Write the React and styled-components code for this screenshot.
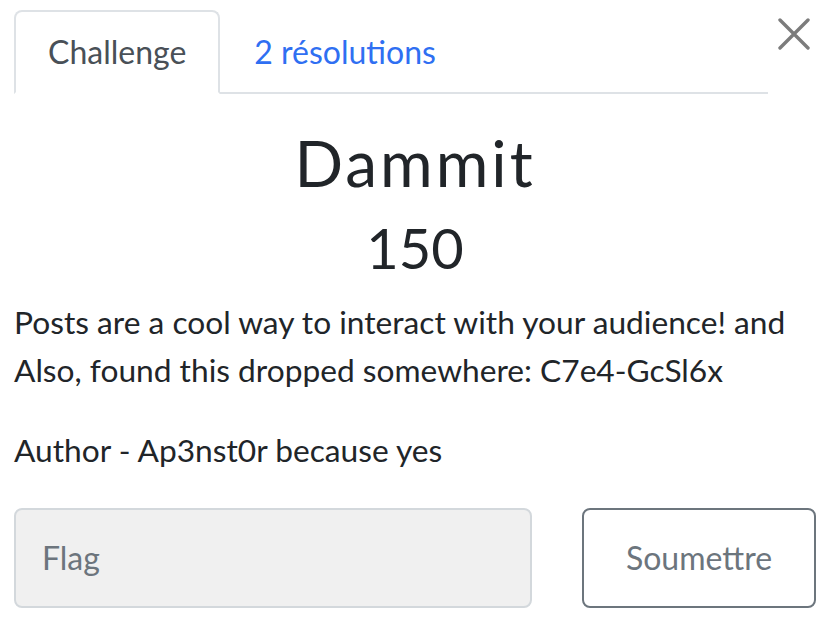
import React from "react";
import styled, { createGlobalStyle } from "styled-components";

const Global = createGlobalStyle`
  html, body { margin: 0; padding: 0; background: #fff; }
  body { font-family: Lato, "Noto Sans", sans-serif; color: #212529; }
  * { box-sizing: border-box; }
`;

const Modal = styled.div`
  width: 838px;
  height: 624px;
  padding: 10px 22px 0 14px;
  display: flex;
  flex-direction: column;
`;

const Header = styled.div`
  display: flex;
  align-items: flex-start;
`;

const Tabs = styled.nav`
  display: flex;
  width: 754px;
  border-bottom: 2px solid #dee2e6;
`;

const Tab = styled.a`
  display: block;
  padding: 16px 32px;
  font-size: 32px;
  line-height: 48px;
  border: 2px solid ${(p) => (p.$active ? "#dee2e6" : "transparent")};
  border-bottom-color: ${(p) => (p.$active ? "#fff" : "transparent")};
  border-radius: 8px 8px 0 0;
  margin-bottom: -2px;
  background: ${(p) => (p.$active ? "#fff" : "transparent")};
  color: ${(p) => (p.$active ? "#495057" : "#2f6ff2")};
  text-decoration: none;
`;

const Close = styled.button`
  margin: 6px 0 0 8px;
  padding: 0;
  border: 0;
  background: none;
  width: 36px;
  height: 36px;
  display: flex;
  align-items: center;
  justify-content: center;
`;

const Title = styled.h2`
  margin: 31px 0 12px;
  font-size: 64px;
  font-weight: 400;
  line-height: 1.2;
  text-align: center;
  letter-spacing: 3px;
`;

const Value = styled.h3`
  margin: 0 0 17px;
  font-size: 56px;
  font-weight: 400;
  line-height: 1.2;
  text-align: center;
`;

const Para = styled.p`
  margin: 0 0 32px;
  font-size: 31.7px;
  line-height: 48px;
`;

const FormRow = styled.div`
  display: flex;
  gap: 50px;
  margin-top: 2px;
`;

const Input = styled.input`
  width: 518px;
  height: 100px;
  padding: 0 26px;
  border: 2px solid #d3d8dc;
  border-radius: 8px;
  background: #f0f0f0;
  font-family: Lato, sans-serif;
  font-size: 32px;
  color: #495057;
  outline: none;
  &::placeholder { color: #6c757d; }
`;

const Submit = styled.button`
  width: 234px;
  height: 100px;
  border: 2px solid #6c757d;
  border-radius: 8px;
  background: #fff;
  color: #6c757d;
  font-family: Lato, sans-serif;
  font-size: 32px;
`;

export default function App() {
  return (
    <>
      <Global />
      <Modal>
        <Header>
          <Tabs>
            <Tab $active>Challenge</Tab>
            <Tab>2 résolutions</Tab>
          </Tabs>
          <Close aria-label="Close">
            <svg width="32" height="34" viewBox="0 0 32 34">
              <path d="M2 3 L30 31 M30 3 L2 31" stroke="#7c7c7c" strokeWidth="3.4" strokeLinecap="round" />
            </svg>
          </Close>
        </Header>
        <Title>Dammit</Title>
        <Value>150</Value>
        <Para>
          Posts are a cool way to interact with your audience! and
          <br />
          Also, found this dropped somewhere: C7e4-GcSl6x
        </Para>
        <Para>Author - Ap3nst0r because yes</Para>
        <FormRow>
          <Input placeholder="Flag" />
          <Submit>Soumettre</Submit>
        </FormRow>
      </Modal>
    </>
  );
}
